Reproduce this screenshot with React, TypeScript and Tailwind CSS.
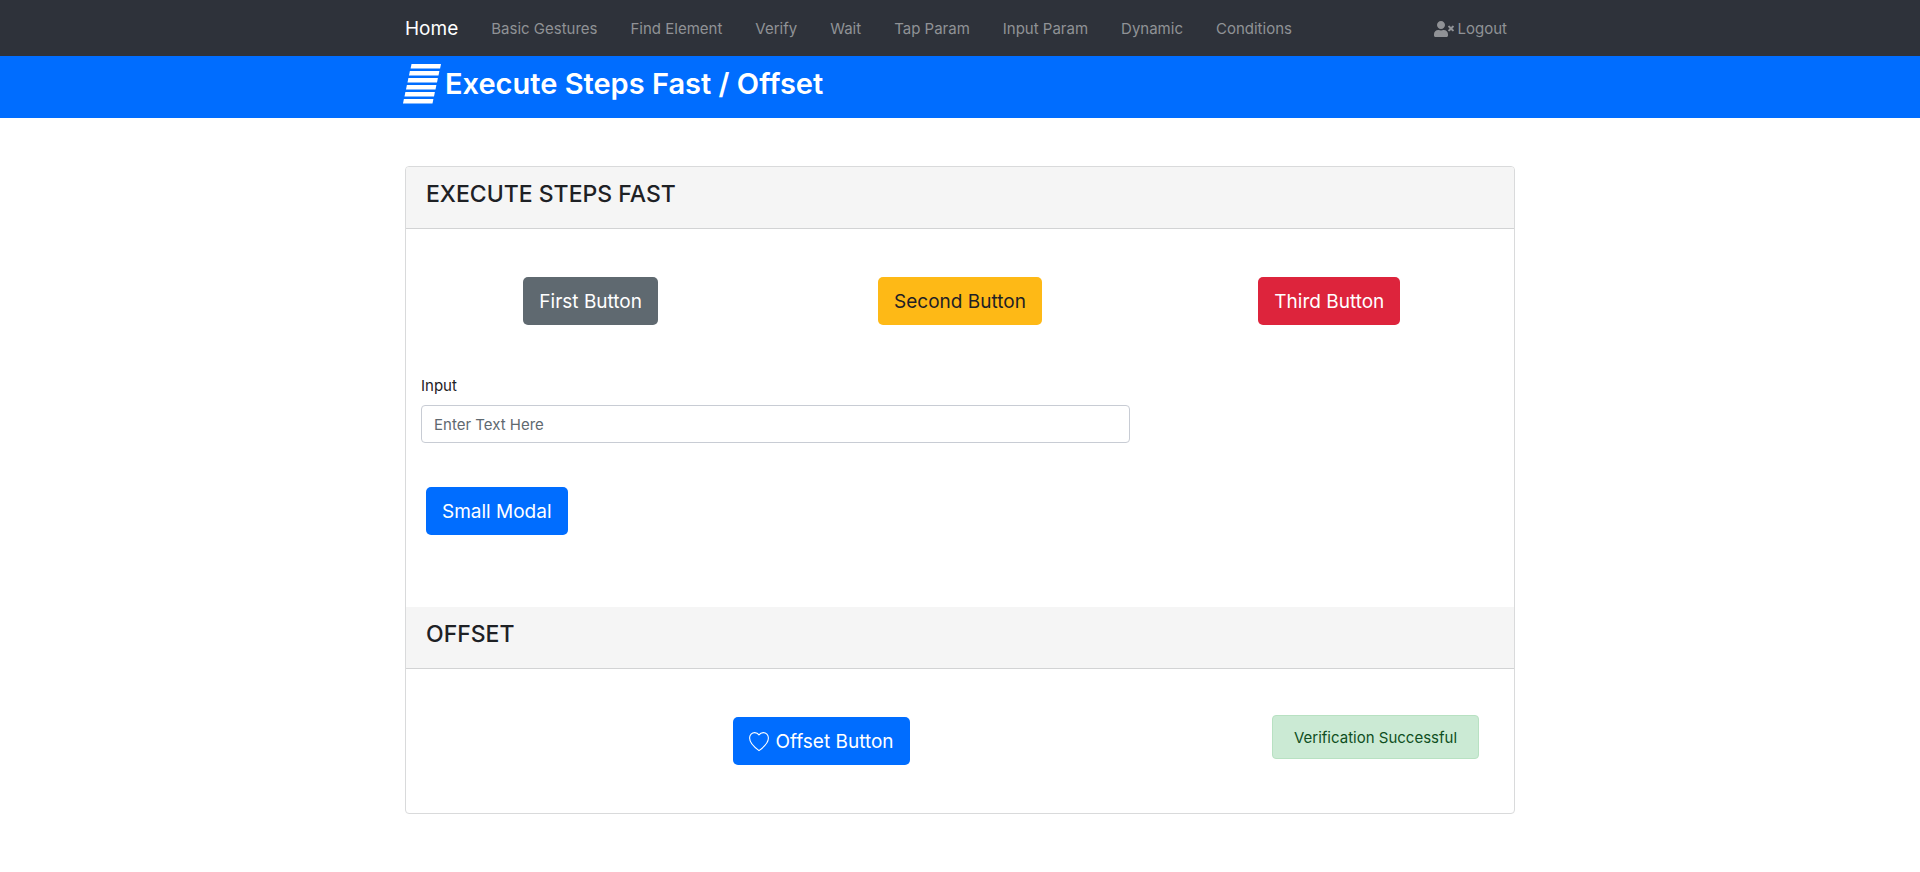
import type { ReactNode } from "react";
import { FaUserTimes } from "react-icons/fa";

const navItems = [
  "Basic Gestures",
  "Find Element",
  "Verify",
  "Wait",
  "Tap Param",
  "Input Param",
  "Dynamic",
  "Conditions",
];

const buttonBase =
  "inline-flex h-12 items-center justify-center gap-1.5 rounded-[5px] px-4 pt-0.5 text-[19px]";

function Container({ children }: { children: ReactNode }) {
  return <div className="mx-auto w-full max-w-[1140px] px-[15px]">{children}</div>;
}

function StripesLogo() {
  return (
    <svg className="-ml-0.5 h-10 w-[38px]" viewBox="0 0 38 40" fill="#fff" aria-hidden="true">
      <path d="M8.5 0H38L37.100 4.400H7.600Z" />
      <path d="M6.900 7H36.400L35.500 11.400H6Z" />
      <path d="M5.400 14H34.900L34 18.400H4.500Z" />
      <path d="M3.900 21H33.400L32.500 25.400H3Z" />
      <path d="M2.400 28H31.900L31 32.400H1.500Z" />
      <path d="M.9 35H30.400L29.500 39.400H0Z" />
    </svg>
  );
}

function HeartIcon() {
  return (
    <svg
      className="size-5"
      viewBox="0 0 20 20"
      fill="none"
      stroke="currentColor"
      strokeWidth="1.1"
      strokeLinejoin="round"
      aria-hidden="true"
    >
      <path d="M10 18.600C5.500 15.400.6 11.200.6 6.100.6 2.900 2.900.6 5.700.6c1.800 0 3.300.8 4.300 2.300 1-1.500 2.500-2.300 4.300-2.300 2.800 0 5.100 2.300 5.100 5.500 0 5.100-4.900 9.300-9.400 12.500Z" />
    </svg>
  );
}

function SectionHeader({ title }: { title: string }) {
  return (
    <div className="border-b border-[#d2d3d4] bg-[#f5f5f5] px-5 pt-[13px] pb-[19px]">
      <h2 className="text-[23px] leading-[29px] font-medium">{title}</h2>
    </div>
  );
}

export default function App() {
  return (
    <div className="min-h-screen bg-white font-['Inter',sans-serif] text-[15px] leading-6 text-[#1e2125]">
      <nav className="bg-[#2e323a] text-[#909296]">
        <Container>
          <div className="flex h-14 items-center gap-[33px] pt-0.5 pr-2">
            <a href="#home" className="text-[19px] text-white">
              Home
            </a>
            {navItems.map((item) => (
              <a key={item} href="#" className="whitespace-nowrap">
                {item}
              </a>
            ))}
            <a href="#logout" className="ml-auto flex items-center gap-1">
              <FaUserTimes className="h-4 w-5" />
              Logout
            </a>
          </div>
        </Container>
      </nav>

      <header className="bg-[#006dff] text-white">
        <Container>
          <div className="flex h-[62px] items-start gap-1 pt-2">
            <StripesLogo />
            <h1 className="text-[29px] leading-10 font-semibold">Execute Steps Fast / Offset</h1>
          </div>
        </Container>
      </header>

      <main className="py-12">
        <Container>
          <div className="overflow-hidden rounded border border-[#d9dadb]">
            <section>
              <SectionHeader title="EXECUTE STEPS FAST" />
              <div className="grid grid-cols-3 justify-items-center pt-12 pb-[49px]">
                <button type="button" className={`${buttonBase} bg-[#5f6970] text-white`}>
                  First Button
                </button>
                <button type="button" className={`${buttonBase} bg-[#feb916]`}>
                  Second Button
                </button>
                <button type="button" className={`${buttonBase} bg-[#dd243c] text-white`}>
                  Third Button
                </button>
              </div>
              <div className="flex w-2/3 flex-col gap-[7px] px-[15px]">
                <label htmlFor="step-input">Input</label>
                <input
                  id="step-input"
                  type="text"
                  placeholder="Enter Text Here"
                  className="h-[38px] w-full rounded border border-[#c8ccd4] px-3 placeholder:text-[#5f6970]"
                />
              </div>
              <div className="px-5 pt-11 pb-[72px]">
                <button type="button" className={`${buttonBase} bg-[#006dff] text-white`}>
                  Small Modal
                </button>
              </div>
            </section>

            <section>
              <SectionHeader title="OFFSET" />
              <div className="grid grid-cols-4 items-start justify-items-center pt-[46px] pb-12">
                <div className="col-span-3 pt-0.5">
                  <button type="button" className={`${buttonBase} bg-[#006dff] text-white`}>
                    <HeartIcon />
                    Offset Button
                  </button>
                </div>
                <div
                  role="status"
                  className="rounded border border-[#b8e1c2] bg-[#cbead4] px-[21px] pt-2.5 pb-2 text-[#0f4f22]"
                >
                  Verification Successful
                </div>
              </div>
            </section>
          </div>
        </Container>
      </main>
    </div>
  );
}
